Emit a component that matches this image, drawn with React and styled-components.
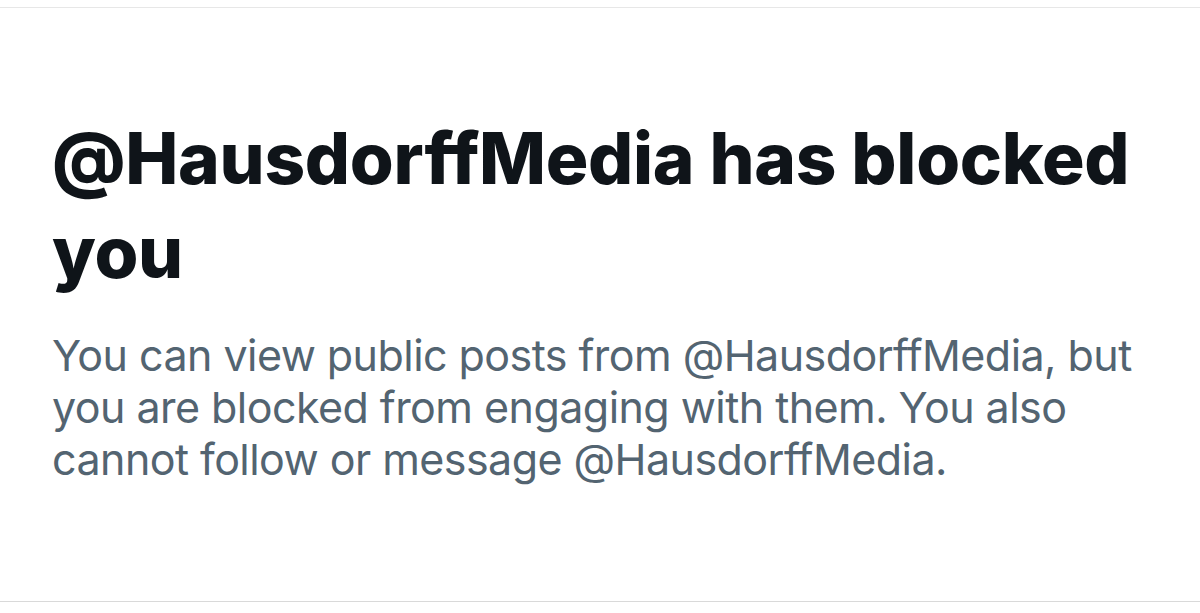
import React from 'react'
import styled, { createGlobalStyle } from 'styled-components'

const GlobalStyle = createGlobalStyle`
  html, body {
    margin: 0;
    padding: 0;
    background: #ffffff;
  }
`

const Screen = styled.div`
  width: 1200px;
  height: 613px;
  padding-top: 7px;
  box-sizing: border-box;
  background: #ffffff;
`

const Panel = styled.section`
  height: 595px;
  box-sizing: border-box;
  border-top: 1px solid #e7e7e7;
  border-bottom: 1px solid #d9d9d9;
  padding: 103px 40px 0 52px;
`

const Title = styled.h1`
  margin: 0;
  font-family: Inter, "Liberation Sans", sans-serif;
  font-weight: 800;
  font-size: 71px;
  line-height: 94px;
  color: #0f1419;
  letter-spacing: -0.3px;
`

const Message = styled.p`
  margin: 30px 0 0;
  font-family: Inter, "Liberation Sans", sans-serif;
  font-weight: 400;
  font-size: 43px;
  line-height: 52px;
  color: #536471;
  letter-spacing: -0.55px;
`

const BlockedNotice = ({ handle }) => {
  const at = `@${handle}`
  return (
    <Panel>
      <Title>{`${at} has blocked you`}</Title>
      <Message>
        {`You can view public posts from ${at}, but you are blocked from engaging with them. You also cannot follow or message ${at}.`}
      </Message>
    </Panel>
  )
}

const App = () =>
  <Screen>
    <GlobalStyle />
    <BlockedNotice handle="HausdorffMedia" />
  </Screen>

export default App
